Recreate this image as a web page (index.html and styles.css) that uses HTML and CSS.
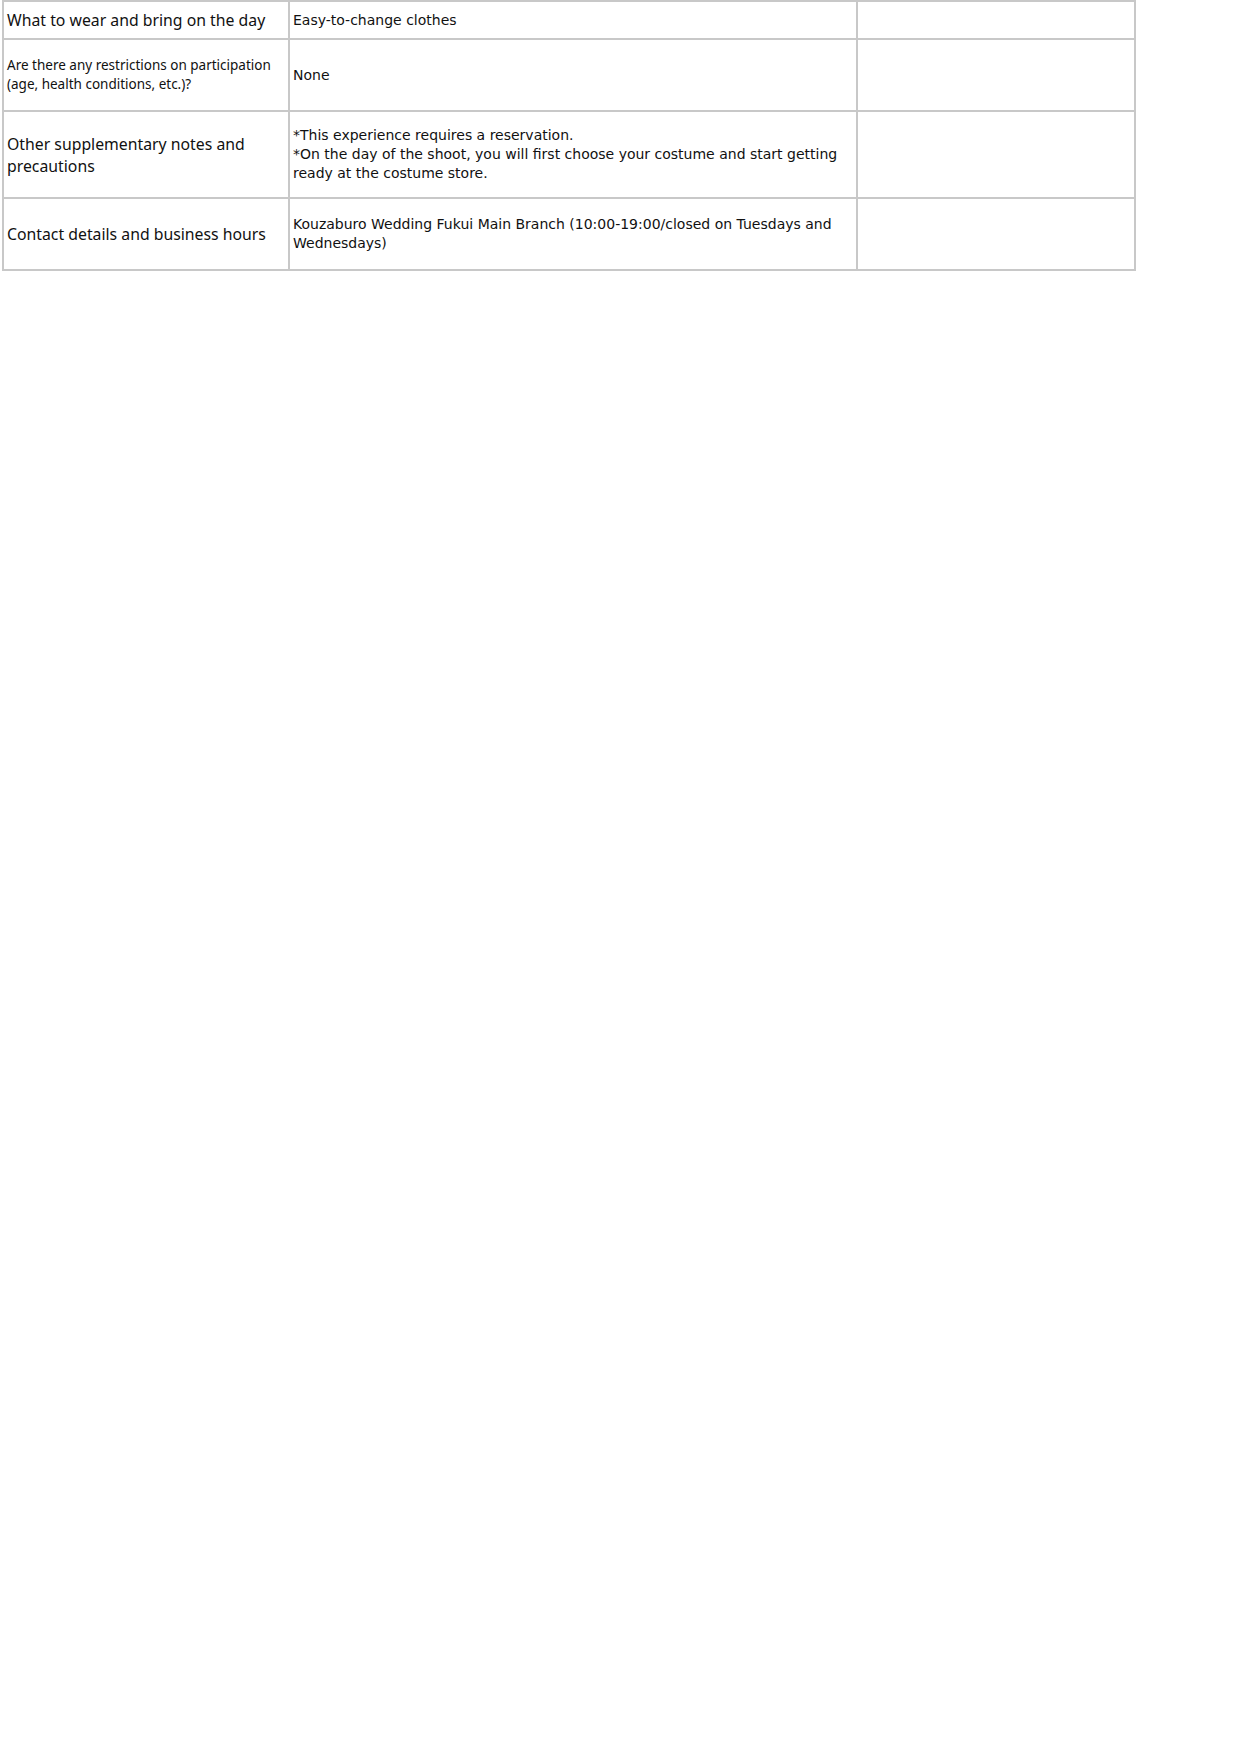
FILE: index.html
```html
<!DOCTYPE html>
<html lang="en">
<head>
  <meta charset="UTF-8" />
  <title>Experience details</title>
  <link rel="stylesheet" href="styles.css">
</head>
<body>

  <table class="info">
    <colgroup>
      <col class="col-label">
      <col class="col-value">
      <col class="col-extra">
    </colgroup>
    <tr class="row-short">
      <td class="label">What to wear and bring on the day</td>
      <td class="value">Easy-to-change clothes</td>
      <td></td>
    </tr>
    <tr class="row-mid">
      <td class="label small">Are there any restrictions on participation<br>(age, health conditions, etc.)?</td>
      <td class="value">None</td>
      <td></td>
    </tr>
    <tr class="row-tall">
      <td class="label">Other supplementary notes and<br>precautions</td>
      <td class="value">*This experience requires a reservation.<br>*On the day of the shoot, you will first choose your costume and start getting<br>ready at the costume store.</td>
      <td></td>
    </tr>
    <tr class="row-mid">
      <td class="label">Contact details and business hours</td>
      <td class="value">Kouzaburo Wedding Fukui Main Branch (10:00-19:00/closed on Tuesdays and<br>Wednesdays)</td>
      <td></td>
    </tr>
  </table>

</body>
</html>
```

FILE: styles.css
```css
body {
  margin: 0;
  background-color: #ffffff;
  color: #111111;
}

.info {
  border-collapse: collapse;
  margin-left: 2px;
  table-layout: fixed;
  width: 1132px;
}

.col-label {
  width: 286px;
}

.col-value {
  width: 568px;
}

.col-extra {
  width: 278px;
}

.info td {
  border: 2px solid #c8c8c8;
  padding: 0 3px;
  vertical-align: middle;
}

.row-short td {
  height: 36px;
}

.row-mid td {
  height: 70px;
}

.row-tall td {
  height: 85px;
}

.label {
  font-family: "Noto Sans", sans-serif;
  font-size: 15.8px;
  line-height: 22px;
}

.label.small {
  font-size: 13.5px;
  line-height: 19px;
}

.value {
  font-family: "DejaVu Sans", sans-serif;
  font-size: 14px;
  line-height: 19px;
}
```
